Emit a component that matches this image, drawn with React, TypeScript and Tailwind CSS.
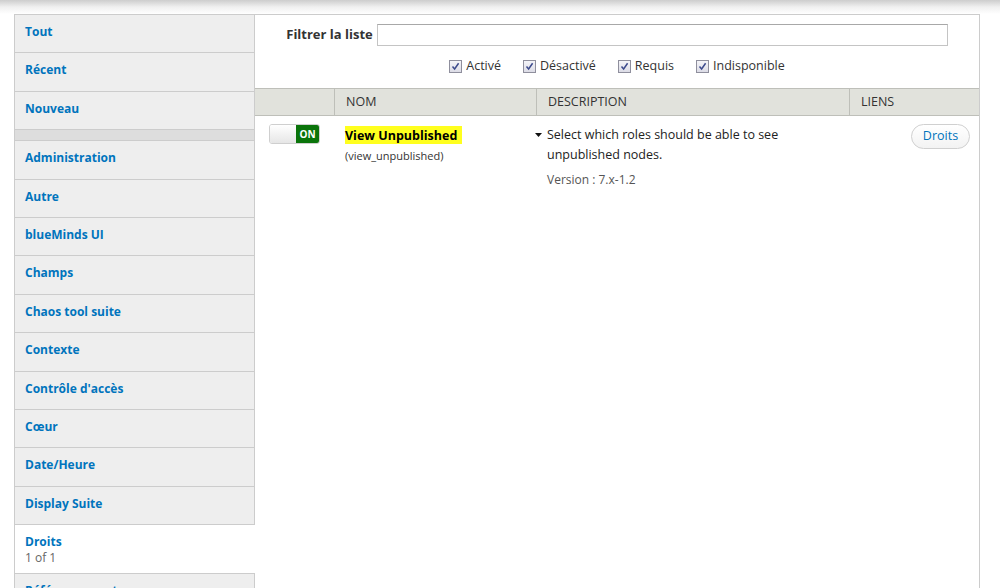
import React from "react";

const items1 = ["Tout", "Récent", "Nouveau"];
const items2 = [
  "Administration",
  "Autre",
  "blueMinds UI",
  "Champs",
  "Chaos tool suite",
  "Contexte",
  "Contrôle d'accès",
  "Cœur",
  "Date/Heure",
  "Display Suite",
];

function NavItem({ label }: { label: string }) {
  return (
    <div className="h-[38.4px] shrink-0 border-b border-[#cccccc] bg-[#eeeeee] pl-[10px] pt-[3px]">
      <a className="text-[12px] font-bold leading-[17px] text-[#0074bd]">{label}</a>
    </div>
  );
}

function Check({ label }: { label: string }) {
  return (
    <label className="flex items-center gap-[4px]">
      <span className="flex h-[13px] w-[13px] items-center justify-center border border-[#8f8f9d] bg-gradient-to-b from-[#f4f4f8] to-[#dcdce6]">
        <svg width="9" height="9" viewBox="0 0 9 9">
          <path d="M1.5 4.6 L3.6 7 L7.6 1.2" fill="none" stroke="#3c4a8c" strokeWidth="1.5" />
        </svg>
      </span>
      <span className="text-[12.5px] text-[#333333]">{label}</span>
    </label>
  );
}

export default function App() {
  return (
    <div className="min-h-[588px] w-[1000px] overflow-hidden bg-white text-[#333333]" style={{ fontFamily: '"Open Sans", "Liberation Sans", sans-serif' }}>
      <div className="h-[14px] bg-gradient-to-b from-[#cdcdcd] via-[#f0f0f0] to-white" />
      <div className="ml-[14px] flex h-[574px] w-[966px] border-x border-t border-[#cccccc]">
        {/* Sidebar */}
        <div className="flex w-[240px] shrink-0 flex-col border-r border-[#cccccc]">
          {items1.map((l) => (
            <NavItem key={l} label={l} />
          ))}
          <div className="h-[11px] shrink-0 border-b border-[#cccccc] bg-[#dddddd]" />
          {items2.map((l) => (
            <NavItem key={l} label={l} />
          ))}
          <div className="-mr-px h-[49px] shrink-0 border-b border-[#cccccc] bg-white pl-[10px] pt-[8px]">
            <div className="text-[12px] font-bold leading-[17px] text-[#0074bd]">Droits</div>
            <div className="text-[12px] leading-[16px] text-[#666666]">1 of 1</div>
          </div>
          <NavItem label="Référencement" />
        </div>

        {/* Main */}
        <div className="flex min-w-0 flex-1 flex-col">
          <div className="mt-[9px] flex h-[22px] items-center justify-center gap-[4px]">
            <span className="text-[13px] font-bold text-[#333333]">Filtrer la liste</span>
            <div className="h-[22px] w-[571px] border border-[#c4c4c4] border-t-[#a8a8a8] bg-white" />
          </div>
          <div className="mt-[12px] flex h-[16px] items-center justify-center gap-[22px]">
            <Check label="Activé" />
            <Check label="Désactivé" />
            <Check label="Requis" />
            <Check label="Indisponible" />
          </div>

          <div className="mt-[14px] grid h-[28px] grid-cols-[79px_202px_313px_130px] border-y border-[#bebfb9] bg-[#e1e2dc] text-[12.5px] uppercase text-[#333333]">
            <div />
            <div className="flex items-center border-l border-[#bebfb9] pl-[11px]">Nom</div>
            <div className="flex items-center border-l border-[#bebfb9] pl-[11px]">Description</div>
            <div className="flex items-center border-l border-[#bebfb9] pl-[11px]">Liens</div>
          </div>

          <div className="grid grid-cols-[79px_202px_313px_130px]">
            <div className="pl-[14px] pt-[8px]">
              <div className="flex h-[20px] w-[51px] overflow-hidden rounded-[3px] border border-[#cfcfcf]">
                <div className="w-[26px] bg-gradient-to-b from-white to-[#e6e6e6]" />
                <div className="flex flex-1 items-center justify-center bg-[#0a740a] text-[10px] font-bold text-white">
                  ON
                </div>
              </div>
            </div>
            <div className="pl-[11px] pt-[6px]">
              <span className="inline-block h-[18px] bg-[#ffff1e] pr-[5px] pt-[2px] text-[12.5px] font-bold leading-[15px] text-black">
                View Unpublished
              </span>
              <div className="mt-[3px] text-[11px] leading-[14px] text-[#333333]">(view_unpublished)</div>
            </div>
            <div className="pl-[11px] pr-[10px] pt-[9px]">
              <div className="relative text-[12.5px] leading-[20px] text-[#222222]">
                <svg className="absolute -left-[12px] top-[8px]" width="7" height="4" viewBox="0 0 7 4">
                  <path d="M0 0 H7 L3.5 4 Z" fill="#111111" />
                </svg>
                Select which roles should be able to see unpublished nodes.
              </div>
              <div className="mt-[7px] text-[12px] leading-[16px] text-[#555555]">Version : 7.x-1.2</div>
            </div>
            <div className="flex justify-end pr-[9px] pt-[8px]">
              <button className="h-[25px] w-[59px] rounded-full border border-[#d0d0d0] bg-gradient-to-b from-white to-[#f3f3f3] text-[12.5px] text-[#0074bd]">
                Droits
              </button>
            </div>
          </div>
        </div>
      </div>
    </div>
  );
}
